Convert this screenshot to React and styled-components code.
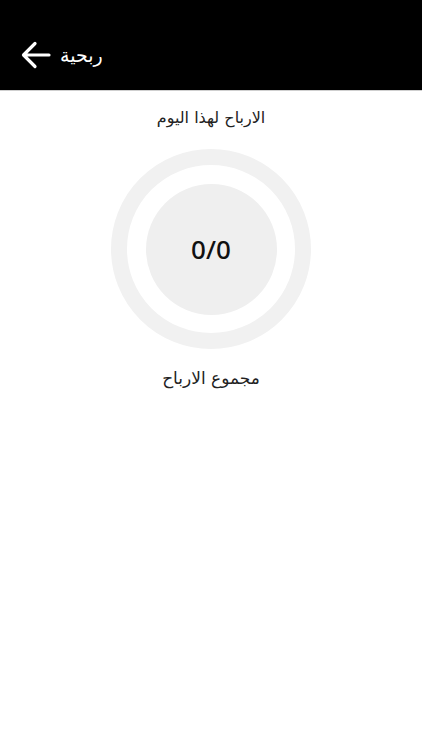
import React from 'react';
import styled, { createGlobalStyle } from 'styled-components';

const GlobalStyle = createGlobalStyle`
  html, body {
    margin: 0;
    padding: 0;
    background: #fff;
    font-family: "DejaVu Sans", "Noto Sans", sans-serif;
  }
`;

const App = () => {
  const today = 0;
  const total = 0;

  return (
    <Page>
      <GlobalStyle />
      <Header>
        <BackButton aria-label="back">
          <svg width="30" height="30" viewBox="0 0 30 30" fill="none">
            <path
              d="M28 15H3M14 3.5L2.5 15L14 26.5"
              stroke="#fff"
              strokeWidth="3.2"
              strokeLinecap="round"
              strokeLinejoin="round"
            />
          </svg>
        </BackButton>
        <Title>ربحية</Title>
      </Header>

      <Content>
        <Label>الارباح لهذا اليوم</Label>
        <Ring>
          <Core>
            <Value>{today}/{total}</Value>
          </Core>
        </Ring>
        <Label $big>مجموع الارباح</Label>
      </Content>
    </Page>
  );
};

// Styled Components
const Page = styled.div`
  min-height: 750px;
  background: #fff;
`;

const Header = styled.header`
  height: 91px;
  background: #000;
  border-bottom: 1px solid #cfcfcf;
  display: flex;
  align-items: center;
  gap: 9px;
  padding-left: 21px;
  padding-top: 20px;
  box-sizing: border-box;
`;

const BackButton = styled.button`
  background: none;
  border: none;
  padding: 0;
  width: 30px;
  height: 30px;
  display: flex;
  align-items: center;
  justify-content: center;
  cursor: pointer;
`;

const Title = styled.h1`
  margin: 0;
  color: #fff;
  font-size: 19px;
  font-weight: normal;
  direction: rtl;
`;

const Content = styled.main`
  display: flex;
  flex-direction: column;
  align-items: center;
  padding-top: 14px;
`;

const Label = styled.p`
  margin: 0;
  direction: rtl;
  color: #222;
  font-size: ${(p) => (p.$big ? '17px' : '16px')};
  line-height: 26px;
  margin-top: ${(p) => (p.$big ? '16px' : '0')};
  margin-bottom: ${(p) => (p.$big ? '0' : '18px')};
`;

const Ring = styled.div`
  width: 200px;
  height: 200px;
  box-sizing: border-box;
  border: 16px solid #f1f1f1;
  border-radius: 50%;
  display: flex;
  align-items: center;
  justify-content: center;
`;

const Core = styled.div`
  width: 131px;
  height: 131px;
  border-radius: 50%;
  background: #efefef;
  display: flex;
  align-items: center;
  justify-content: center;
`;

const Value = styled.span`
  font-family: "Noto Sans", "DejaVu Sans", sans-serif;
  font-size: 26px;
  font-weight: 500;
  color: #111;
`;

export default App;
